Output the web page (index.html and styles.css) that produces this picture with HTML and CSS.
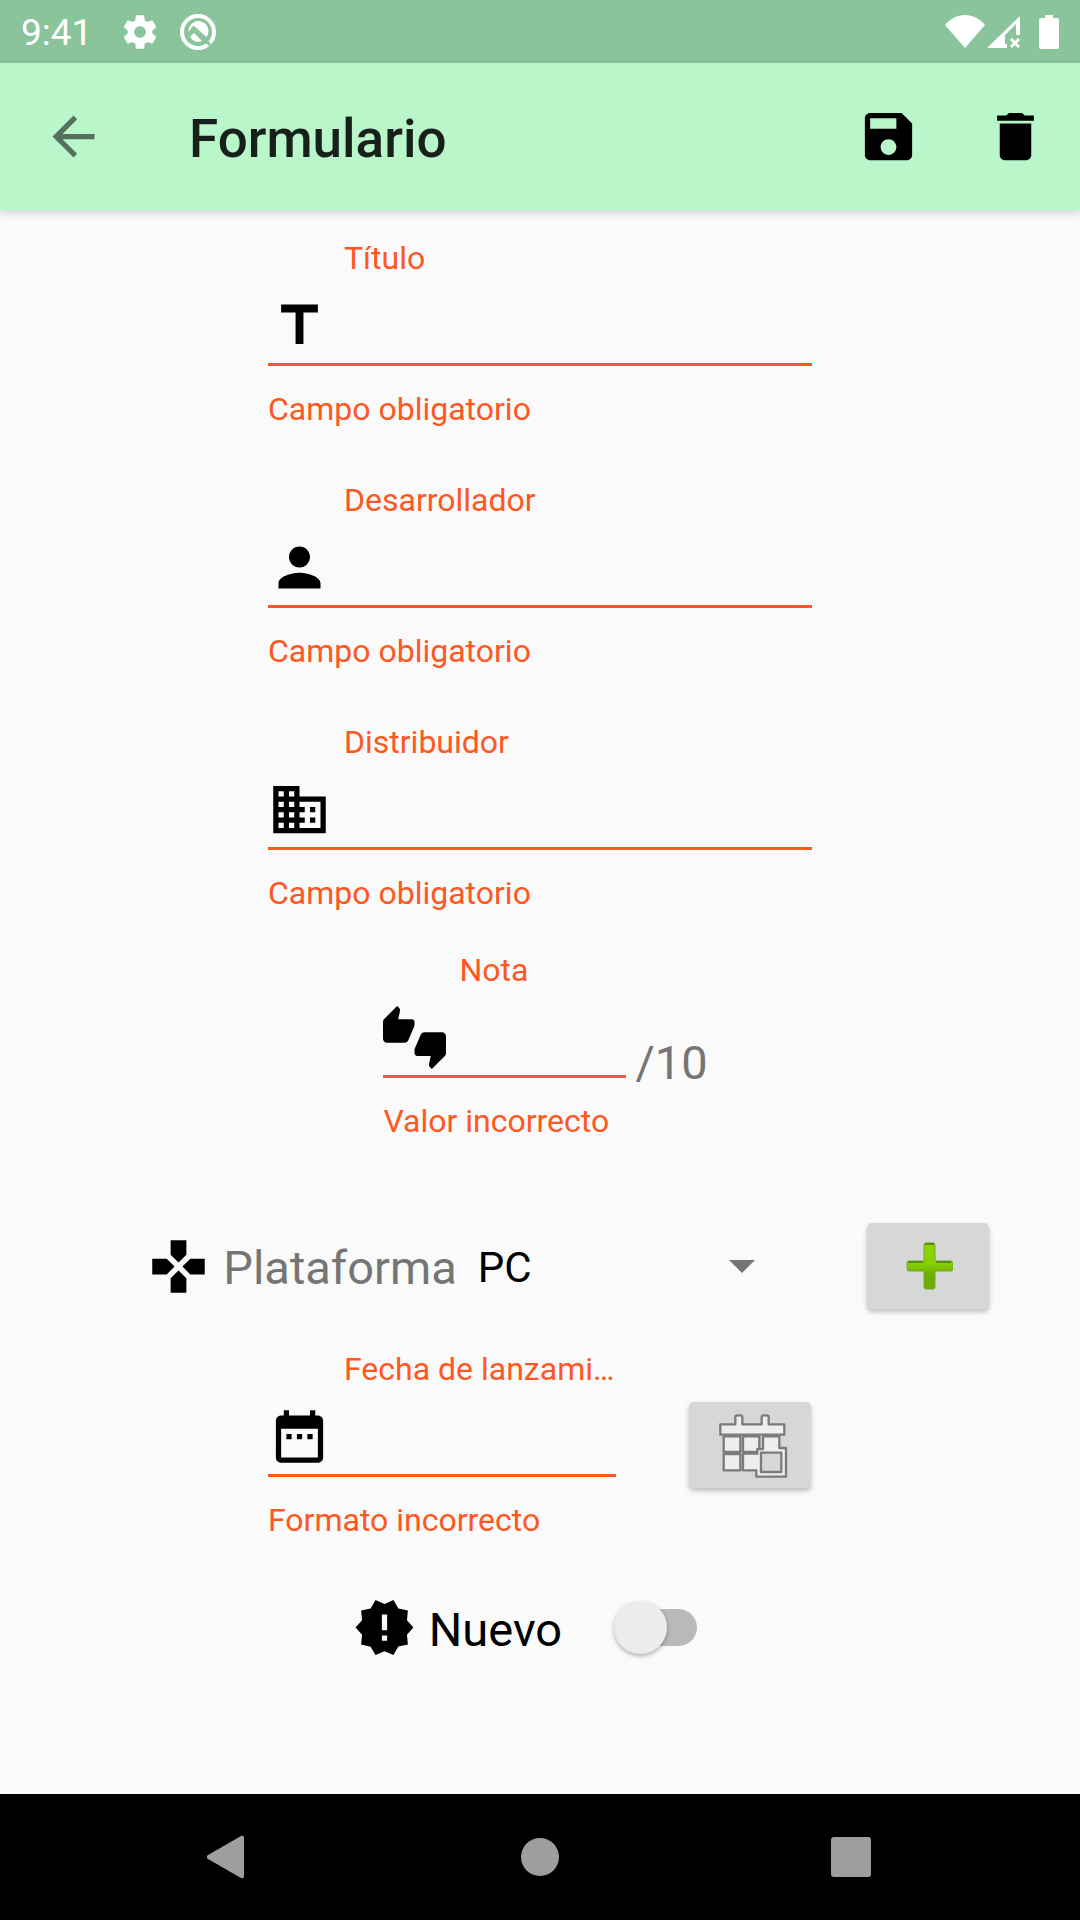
FILE: index.html
```html
<!DOCTYPE html>
<html lang="es">
<head>
  <meta charset="utf-8">
  <meta name="viewport" content="width=device-width, initial-scale=1">
  <title>Formulario</title>
  <link rel="stylesheet" href="styles.css">
</head>
<body>
  <div class="status-bar">
    <span class="status-time">9:41</span>
    <div class="status-notifications">
      <svg width="40" height="40" viewBox="0 0 24 24" fill="currentColor" aria-hidden="true"><path d="M19.43 12.98c.04-.32.07-.64.07-.98s-.03-.66-.07-.98l2.11-1.65c.19-.15.24-.42.12-.64l-2-3.46c-.12-.22-.39-.3-.61-.22l-2.49 1c-.52-.4-1.08-.73-1.69-.98l-.38-2.65C14.46 2.18 14.25 2 14 2h-4c-.25 0-.46.18-.49.42l-.38 2.65c-.61.25-1.17.59-1.69.98l-2.49-1c-.23-.09-.49 0-.61.22l-2 3.46c-.13.22-.07.49.12.64l2.11 1.65c-.04.32-.07.65-.07.98s.03.66.07.98l-2.11 1.65c-.19.15-.24.42-.12.64l2 3.46c.12.22.39.3.61.22l2.49-1c.52.4 1.08.73 1.69.98l.38 2.65c.03.24.24.42.49.42h4c.25 0 .46-.18.49-.42l.38-2.65c.61-.25 1.17-.59 1.69-.98l2.49 1c.23.09.49 0 .61-.22l2-3.46c.12-.22.07-.49-.12-.64l-2.11-1.65zM12 15.5c-1.930 0-3.500-1.570-3.500-3.500s1.570-3.500 3.500-3.500 3.500 1.570 3.500 3.500-1.570 3.500-3.500 3.500z"/></svg>
      <svg width="40" height="40" viewBox="0 0 40 40" fill="none" aria-hidden="true">
        <circle cx="20" cy="20" r="16" stroke="currentColor" stroke-width="4"/>
        <path fill="currentColor" d="M10.500 20A10 10 0 1 1 28.500 25L15.500 13.500zM12 25l4-4 8 8A10 10 0 0 1 12 25z"/>
        <path class="status-cut" d="M25 26l7 7"/>
      </svg>
    </div>
    <div class="status-system">
      <svg width="40" height="34" viewBox="0 0 40 34" fill="currentColor" aria-hidden="true"><path d="M20 33L0 10C5 4 12 0 20 0s15 4 20 10z"/></svg>
      <svg width="34" height="34" viewBox="0 0 34 34" aria-hidden="true"><path fill="currentColor" fill-rule="evenodd" d="M0 33L33 1v19h-4V9L18 20v9h2v4z"/><path d="M24 24l8 8m0-8l-8 8" stroke="currentColor" stroke-width="3"/></svg>
      <svg class="battery" width="20" height="34" viewBox="0 0 20 34" fill="currentColor" aria-hidden="true"><path d="M6 0h8v3h4q2 0 2 2v27q0 2-2 2H2q-2 0-2-2V5q0-2 2-2h4z"/></svg>
    </div>
  </div>

  <header class="app-bar">
    <button class="bar-button back" type="button" aria-label="Volver">
      <svg class="icon" viewBox="0 0 24 24"><path d="M20 11H7.830l5.590-5.590L12 4l-8 8 8 8 1.410-1.410L7.830 13H20z"/></svg>
    </button>
    <h1 class="title">Formulario</h1>
    <button class="bar-button" type="submit" form="game-form" aria-label="Guardar">
      <svg class="icon" viewBox="0 0 24 24"><path d="M17 3H5c-1.110 0-2 .9-2 2v14c0 1.100.89 2 2 2h14c1.100 0 2-.9 2-2V7l-4-4zm-5 16c-1.660 0-3-1.340-3-3s1.340-3 3-3 3 1.340 3 3-1.340 3-3 3zm3-10H5V5h10v4z"/></svg>
    </button>
    <button class="bar-button" type="button" aria-label="Eliminar">
      <svg class="icon" viewBox="0 0 24 24"><path d="M6 19c0 1.100.9 2 2 2h8c1.100 0 2-.9 2-2V7H6v12zM19 4h-3.500l-1-1h-5l-1 1H5v2h14V4z"/></svg>
    </button>
  </header>

  <main class="content">
    <form class="form" id="game-form" novalidate>
      <div class="field">
        <label class="field-label" for="titulo">Título</label>
        <div class="field-box">
          <svg class="icon" viewBox="0 0 24 24" aria-hidden="true"><path d="M5 4v3h5.500v12h3V7H19V4z"/></svg>
          <input class="field-input" id="titulo" type="text" aria-describedby="titulo-error">
        </div>
        <p class="field-error" id="titulo-error">Campo obligatorio</p>
      </div>

      <div class="field">
        <label class="field-label" for="desarrollador">Desarrollador</label>
        <div class="field-box">
          <svg class="icon" viewBox="0 0 24 24" aria-hidden="true"><path d="M12 12c2.210 0 4-1.790 4-4s-1.790-4-4-4-4 1.790-4 4 1.790 4 4 4zm0 2c-2.670 0-8 1.340-8 4v2h16v-2c0-2.660-5.330-4-8-4z"/></svg>
          <input class="field-input" id="desarrollador" type="text" aria-describedby="desarrollador-error">
        </div>
        <p class="field-error" id="desarrollador-error">Campo obligatorio</p>
      </div>

      <div class="field">
        <label class="field-label" for="distribuidor">Distribuidor</label>
        <div class="field-box">
          <svg class="icon" viewBox="0 0 24 24" aria-hidden="true"><path d="M12 7V3H2v18h20V7H12zM6 19H4v-2h2v2zm0-4H4v-2h2v2zm0-4H4V9h2v2zm0-4H4V5h2v2zm4 12H8v-2h2v2zm0-4H8v-2h2v2zm0-4H8V9h2v2zm0-4H8V5h2v2zm10 12h-8v-2h2v-2h-2v-2h2v-2h-2V9h8v10zm-2-8h-2v2h2v-2zm0 4h-2v2h2v-2z"/></svg>
          <input class="field-input" id="distribuidor" type="text" aria-describedby="distribuidor-error">
        </div>
        <p class="field-error" id="distribuidor-error">Campo obligatorio</p>
      </div>

      <div class="score-row">
        <div class="field field-score">
          <label class="field-label" for="nota">Nota</label>
          <div class="field-box">
            <svg class="icon" viewBox="0 0 24 24" aria-hidden="true"><path d="M12 6c0-.55-.45-1-1-1H5.820l.66-3.180.02-.23c0-.31-.13-.59-.33-.8L5.380 0 .44 4.940C.17 5.210 0 5.590 0 6v6.500c0 .83.67 1.500 1.500 1.500h6.750c.62 0 1.150-.38 1.380-.91l2.260-5.290c.07-.17.11-.36.11-.55V6zm10.500 4h-6.750c-.62 0-1.150.38-1.380.91l-2.260 5.290c-.07.17-.11.36-.11.55V18c0 .55.45 1 1 1h5.180l-.66 3.180-.02.24c0 .31.13.59.33.8l.79.78 4.940-4.940c.27-.27.44-.65.44-1.060v-6.500c0-.83-.67-1.500-1.500-1.500z"/></svg>
            <input class="field-input" id="nota" type="text" inputmode="decimal" aria-describedby="nota-error">
          </div>
          <p class="field-error" id="nota-error">Valor incorrecto</p>
        </div>
        <span class="score-max">/10</span>
      </div>

      <div class="platform-row">
        <label class="row-label platform-label" for="plataforma">
          <svg class="icon" viewBox="0 0 24 24" aria-hidden="true"><path d="M15 7.500V2H9v5.500l3 3 3-3zM7.500 9H2v6h5.500l3-3-3-3zM9 16.500V22h6v-5.500l-3-3-3 3zM16.500 9l-3 3 3 3H22V9h-5.500z"/></svg>
          <span class="row-text">Plataforma</span>
        </label>
        <div class="platform-select">
          <select id="plataforma"><option>PC</option></select>
          <svg width="26" height="13" viewBox="0 0 26 13" aria-hidden="true"><path d="M0 0h26L13 13z"/></svg>
        </div>
        <button class="tile-button" type="button" aria-label="Añadir plataforma">
          <svg width="50" height="50" viewBox="0 0 50 50">
            <defs>
              <linearGradient id="plus-green" x1="0" y1="0" x2="0" y2="1">
                <stop offset="0" stop-color="#8ed600"/>
                <stop offset=".45" stop-color="#86d000"/>
                <stop offset=".7" stop-color="#6cab00"/>
                <stop offset="1" stop-color="#70ae00"/>
              </linearGradient>
            </defs>
            <path fill="url(#plus-green)" stroke="#75a92c" d="M23 2h7q2 0 2 2v16h16q2 0 2 2v6q0 2-2 2H32v16q0 2-2 2h-7q-2 0-2-2V30H6q-2 0-2-2v-6q0-2 2-2h15V4q0-2 2-2z"/>
            <path d="M22 3h9M5 21h15M33 21h15" stroke="#588f00" stroke-width="2"/>
          </svg>
        </button>
      </div>

      <div class="date-row">
        <div class="field field-date">
          <label class="field-label" for="fecha">Fecha de lanzamiento</label>
          <div class="field-box">
            <svg class="icon" viewBox="0 0 24 24" aria-hidden="true"><path d="M9 11H7v2h2v-2zm4 0h-2v2h2v-2zm4 0h-2v2h2v-2zm2-7h-1V2h-2v2H8V2H6v2H5c-1.110 0-1.990.9-1.990 2L3 20c0 1.100.89 2 2 2h14c1.100 0 2-.9 2-2V6c0-1.100-.9-2-2-2zm0 16H5V9h14v11z"/></svg>
            <input class="field-input" id="fecha" type="text" aria-describedby="fecha-error">
          </div>
          <p class="field-error" id="fecha-error">Formato incorrecto</p>
        </div>
        <button class="tile-button" type="button" aria-label="Elegir fecha">
          <svg width="76" height="76" viewBox="126 81 228 228" fill="#eee" stroke="#7a7c7b" stroke-width="7" stroke-linejoin="round">
            <path d="M161 169h50v47h-50zM219 169h49v47h-49zM161 222h50v49h-50z"/>
            <path d="M279 169h49v35h20v86h-89v-19h-40v-50h43v-14h17z"/>
            <path d="M151 133h45v-21q0-6 6-6h9q6 0 6 6v21h58v-21q0-6 6-6h9q6 0 6 6v21h47v31H151z"/>
            <path fill="#d6d8d7" d="M273 218h61v58h-61z"/>
          </svg>
        </button>
      </div>

      <div class="new-row">
        <label class="row-label" for="nuevo">
          <svg class="icon" viewBox="0 0 24 24" aria-hidden="true"><path d="M23 12l-2.440-2.780.34-3.680-3.610-.82-1.890-3.180L12 3 8.600 1.540 6.710 4.720l-3.610.81.34 3.680L1 12l2.440 2.780-.34 3.690 3.610.82 1.890 3.180L12 21l3.400 1.460 1.890-3.180 3.610-.82-.34-3.680L23 12zm-10 5h-2v-2h2v2zm0-4h-2V7h2v6z"/></svg>
          <span class="row-text">Nuevo</span>
        </label>
        <input class="switch" id="nuevo" type="checkbox" role="switch">
      </div>
    </form>
  </main>

  <nav class="nav-bar" aria-label="Sistema">
    <button class="nav-button" type="button" aria-label="Atrás"><svg width="44" height="44" viewBox="0 0 44 44"><path d="M1 20L34 1q3-1 3 2v38q0 3-3 2L1 24q-3-2 0-4z"/></svg></button>
    <button class="nav-button" type="button" aria-label="Inicio"><svg width="44" height="44" viewBox="0 0 44 44"><circle cx="22" cy="22" r="19"/></svg></button>
    <button class="nav-button" type="button" aria-label="Recientes"><svg width="44" height="44" viewBox="0 0 44 44"><rect x="2" y="2" width="40" height="40" rx="3"/></svg></button>
  </nav>
</body>
</html>
```

FILE: styles.css
```css
:root {
  --primary: #b9f7cb;
  --primary-dark: #8ac49b;
  --error: #ff5722;
  --surface: #fafafa;
  --muted: #757575;
  --tile: #d6d8d7;
}

* {
  box-sizing: border-box;
}

body {
  display: flex;
  flex-direction: column;
  min-height: 100vh;
  margin: 0;
  background: var(--surface);
  color: #000;
  font-family: Roboto, "Noto Sans", sans-serif;
}

button,
input,
select {
  margin: 0;
  padding: 0;
  border: 0;
  background: none;
  color: inherit;
  font-family: inherit;
}

svg {
  display: block;
  flex: none;
}

.icon {
  width: 63px;
  height: 63px;
  fill: currentColor;
}

/* System status bar */
.status-bar {
  display: flex;
  align-items: center;
  height: 63px;
  padding: 0 21px;
  background: var(--primary-dark);
  color: #fff;
}

.status-time {
  padding-top: 2px;
  font-size: 37px;
  line-height: 44px;
}

.status-notifications {
  display: flex;
  gap: 18px;
  margin-left: 28px;
}

.status-cut {
  stroke: var(--primary-dark);
  stroke-width: 3px;
}

.status-system {
  display: flex;
  gap: 2px;
  margin-left: auto;
}

.battery {
  margin-left: 16px;
}

/* App bar */
.app-bar {
  display: flex;
  align-items: center;
  height: 147px;
  padding-right: 1px;
  background: var(--primary);
  box-shadow: 0 3px 9px rgba(0, 0, 0, .16);
}

.bar-button {
  display: flex;
  align-items: center;
  justify-content: center;
  width: 127px;
  height: 127px;
}

.back {
  width: 147px;
  color: rgba(0, 0, 0, .54);
}

.title {
  flex: 1;
  margin: 0;
  padding: 4px 0 0 42px;
  color: rgba(0, 0, 0, .87);
  font-size: 53px;
  font-weight: 500;
  line-height: 62px;
}

/* Form */
.content {
  flex: 1;
  padding-top: 29px;
}

.form {
  display: flex;
  flex-direction: column;
  align-items: center;
}

.field {
  width: 100%;
  max-width: 544px;
  color: var(--error);
  font-size: 32px;
  line-height: 38px;
}

.field + .field {
  margin-top: 53px;
}

.field-label {
  display: block;
  margin-left: 76px;
  overflow: hidden;
  text-overflow: ellipsis;
  white-space: nowrap;
}

.field-box {
  display: flex;
  gap: 13px;
  padding: 17px 0 6px;
  border-bottom: 3px solid var(--error);
  color: #000;
}

.field-input {
  flex: 1;
  min-width: 0;
  font-size: 42px;
  outline: none;
}

.field-error {
  margin: 24px 0 0;
}

.score-row {
  display: flex;
  gap: 9px;
  margin-top: 39px;
  padding-left: 11px;
}

.field-score {
  width: 243px;
}

.score-max {
  margin-top: 84px;
  color: var(--muted);
  font-size: 47px;
  line-height: 56px;
}

.platform-row {
  display: flex;
  align-items: center;
  justify-content: center;
  width: 100%;
  margin-top: 83px;
  padding-left: 56px;
}

.row-label {
  display: flex;
  align-items: center;
  gap: 13px;
  font-size: 47px;
  line-height: 56px;
}

.row-text {
  padding-top: 4px;
}

.platform-label {
  color: var(--muted);
}

.platform-label .icon {
  fill: #000;
}

.platform-select {
  display: grid;
  align-items: center;
  width: 277px;
  margin: 0 112px 0 21px;
}

.platform-select select,
.platform-select svg {
  grid-area: 1 / 1;
}

.platform-select select {
  width: 100%;
  padding-top: 4px;
  appearance: none;
  font-size: 42px;
  line-height: 50px;
}

.platform-select svg {
  justify-self: end;
  fill: var(--muted);
  pointer-events: none;
}

.tile-button {
  display: flex;
  flex: none;
  align-items: center;
  justify-content: center;
  width: 122px;
  height: 86px;
  border-radius: 5px;
  background: var(--tile);
  box-shadow: 0 3px 5px rgba(0, 0, 0, .24);
}

.date-row {
  display: flex;
  gap: 73px;
  justify-content: flex-start;
  width: 100%;
  max-width: 544px;
  margin-top: 41px;
}

.field-date {
  width: 348px;
}

.date-row .tile-button {
  margin-top: 52px;
}

.new-row {
  display: flex;
  align-items: center;
  gap: 52px;
  margin-top: 57px;
  padding-right: 30px;
}

.switch {
  display: grid;
  align-items: center;
  width: 83px;
  height: 53px;
  appearance: none;
}

.switch::before,
.switch::after {
  grid-area: 1 / 1;
  content: "";
}

.switch::before {
  height: 37px;
  margin-left: 9px;
  border-radius: 19px;
  background: #b9b9b9;
}

.switch::after {
  width: 53px;
  height: 53px;
  border-radius: 50%;
  background: #ececec;
  box-shadow: 0 2px 4px rgba(0, 0, 0, .3);
}

.switch:checked::after {
  justify-self: end;
}

/* System navigation bar */
.nav-bar {
  display: flex;
  align-items: center;
  justify-content: center;
  gap: 185px;
  height: 126px;
  background: #000;
}

.nav-button {
  display: flex;
  align-items: center;
  justify-content: center;
  width: 126px;
  height: 126px;
  fill: #9e9e9e;
}
```
